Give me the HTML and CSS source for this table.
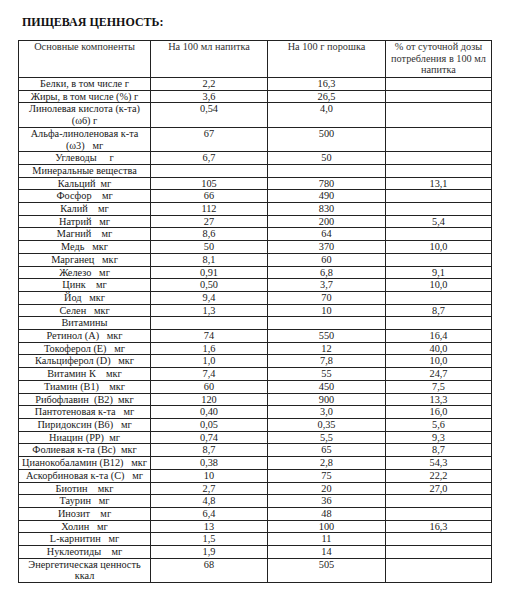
FILE: index.html
```html
<!DOCTYPE html>
<html>
<head>
<meta charset="utf-8">
<title>Пищевая ценность</title>
<link rel="stylesheet" href="styles.css">
</head>
<body>
<div class="page">
  <h1 class="title">ПИЩЕВАЯ ЦЕННОСТЬ:</h1>
  <table class="nutr">
    <colgroup>
      <col class="c1"><col class="c2"><col class="c3"><col class="c4">
    </colgroup>
    <tr class="head"><td>Основные компоненты</td><td>На 100 мл напитка</td><td>На 100 г порошка</td><td>% от суточной дозы потребления в 100 мл напитка</td></tr>
    <tr><td>Белки, в том числе г</td><td>2,2</td><td>16,3</td><td></td></tr>
    <tr><td>Жиры, в том числе (%) г</td><td>3,6</td><td>26,5</td><td></td></tr>
    <tr><td>Линолевая кислота (к-та)<br>(ω6) г</td><td>0,54</td><td>4,0</td><td></td></tr>
    <tr><td>Альфа-линоленовая к-та<br>(ω3)&nbsp;&nbsp; мг</td><td>67</td><td>500</td><td></td></tr>
    <tr><td>Углеводы&nbsp;&nbsp;&nbsp;&nbsp; г</td><td>6,7</td><td>50</td><td></td></tr>
    <tr><td>Минеральные вещества</td><td></td><td></td><td></td></tr>
    <tr><td>Кальций&nbsp; мг</td><td>105</td><td>780</td><td>13,1</td></tr>
    <tr><td>Фосфор&nbsp;&nbsp;&nbsp; мг</td><td>66</td><td>490</td><td></td></tr>
    <tr><td>Калий&nbsp;&nbsp;&nbsp; мг</td><td>112</td><td>830</td><td></td></tr>
    <tr><td>Натрий&nbsp;&nbsp; мг</td><td>27</td><td>200</td><td>5,4</td></tr>
    <tr><td>Магний&nbsp;&nbsp;&nbsp; мг</td><td>8,6</td><td>64</td><td></td></tr>
    <tr><td>Медь&nbsp;&nbsp; мкг</td><td>50</td><td>370</td><td>10,0</td></tr>
    <tr><td>Марганец&nbsp;&nbsp; мкг</td><td>8,1</td><td>60</td><td></td></tr>
    <tr><td>Железо&nbsp;&nbsp; мг</td><td>0,91</td><td>6,8</td><td>9,1</td></tr>
    <tr><td>Цинк&nbsp;&nbsp;&nbsp; мг</td><td>0,50</td><td>3,7</td><td>10,0</td></tr>
    <tr><td>Йод&nbsp;&nbsp; мкг</td><td>9,4</td><td>70</td><td></td></tr>
    <tr><td>Селен&nbsp;&nbsp; мкг</td><td>1,3</td><td>10</td><td>8,7</td></tr>
    <tr><td>Витамины</td><td></td><td></td><td></td></tr>
    <tr><td>Ретинол (А)&nbsp;&nbsp; мкг</td><td>74</td><td>550</td><td>16,4</td></tr>
    <tr><td>Токоферол (Е)&nbsp;&nbsp; мг</td><td>1,6</td><td>12</td><td>40,0</td></tr>
    <tr><td>Кальциферол (D)&nbsp;&nbsp; мкг</td><td>1,0</td><td>7,8</td><td>10,0</td></tr>
    <tr><td>Витамин К&nbsp;&nbsp;&nbsp; мкг</td><td>7,4</td><td>55</td><td>24,7</td></tr>
    <tr><td>Тиамин (В1)&nbsp;&nbsp;&nbsp; мкг</td><td>60</td><td>450</td><td>7,5</td></tr>
    <tr><td>Рибофлавин&nbsp; (В2)&nbsp; мкг</td><td>120</td><td>900</td><td>13,3</td></tr>
    <tr><td>Пантотеновая к-та&nbsp;&nbsp; мг</td><td>0,40</td><td>3,0</td><td>16,0</td></tr>
    <tr><td>Пиридоксин (В6)&nbsp;&nbsp; мг</td><td>0,05</td><td>0,35</td><td>5,6</td></tr>
    <tr><td>Ниацин (РР)&nbsp; мг</td><td>0,74</td><td>5,5</td><td>9,3</td></tr>
    <tr><td>Фолиевая к-та (Вс)&nbsp; мкг</td><td>8,7</td><td>65</td><td>8,7</td></tr>
    <tr><td>Цианокобаламин (В12)&nbsp;&nbsp; мкг</td><td>0,38</td><td>2,8</td><td>54,3</td></tr>
    <tr><td>Аскорбиновая к-та (С)&nbsp;&nbsp; мг</td><td>10</td><td>75</td><td>22,2</td></tr>
    <tr><td>Биотин&nbsp;&nbsp;&nbsp; мкг</td><td>2,7</td><td>20</td><td>27,0</td></tr>
    <tr><td>Таурин&nbsp;&nbsp; мг</td><td>4,8</td><td>36</td><td></td></tr>
    <tr><td>Инозит&nbsp;&nbsp;&nbsp; мг</td><td>6,4</td><td>48</td><td></td></tr>
    <tr><td>Холин&nbsp;&nbsp; мг</td><td>13</td><td>100</td><td>16,3</td></tr>
    <tr><td>L-карнитин&nbsp;&nbsp; мг</td><td>1,5</td><td>11</td><td></td></tr>
    <tr><td>Нуклеотиды&nbsp;&nbsp;&nbsp; мг</td><td>1,9</td><td>14</td><td></td></tr>
    <tr><td>Энергетическая ценность<br>ккал</td><td>68</td><td>505</td><td></td></tr>
  </table>
</div>
</body>
</html>
```

FILE: styles.css
```css
html, body {
  margin: 0;
  padding: 0;
  background: #ffffff;
}

.page {
  padding: 12px 0 0 18px;
  font-family: "Liberation Serif", "Times New Roman", serif;
  color: #1a1a1a;
}

.title {
  margin: 0 0 8px 4px;
  font-size: 12px;
  font-weight: bold;
  line-height: 20px;
  color: #111111;
}

.nutr {
  border-collapse: collapse;
  table-layout: fixed;
  width: 473px;
  font-size: 10.3px;
  line-height: 11.7px;
}

.c1 { width: 132px; }
.c2 { width: 117px; }
.c3 { width: 118px; }
.c4 { width: 106px; }

.nutr td {
  border: 1px solid #222222;
  padding: 0 2px;
  text-align: center;
  vertical-align: top;
  white-space: nowrap;
}

.nutr .head td {
  white-space: normal;
  height: 36px;
  color: #333333;
}
```
